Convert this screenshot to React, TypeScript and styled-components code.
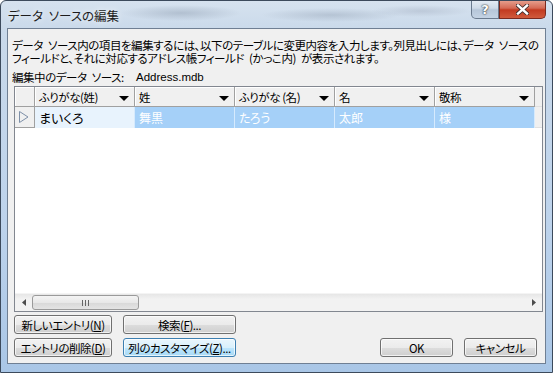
import React, { FC } from "react";
import styled, { createGlobalStyle } from "styled-components";

const GlobalStyle = createGlobalStyle`
  html, body {
    margin: 0;
    padding: 0;
    background: #ffffff;
  }
  body {
    font-family: "Noto Sans CJK JP", "Liberation Sans", sans-serif;
    font-size: 12px;
    color: #000;
  }
`;

const Frame = styled.div`
  width: 553px;
  height: 373px;
  box-sizing: border-box;
  display: flex;
  flex-direction: column;
  border: 1px solid #3c4a5c;
  border-radius: 6px 6px 0 0;
  background:
    radial-gradient(ellipse 60px 8px at 180px 12px, rgba(120, 135, 155, 0.35), transparent),
    radial-gradient(ellipse 70px 7px at 330px 14px, rgba(120, 135, 155, 0.3), transparent),
    radial-gradient(ellipse 50px 6px at 420px 10px, rgba(140, 150, 170, 0.3), transparent),
    linear-gradient(180deg, #d6e2ef 0%, #c9d9ea 30px, #bdd3ec 60%, #a9c6e6 100%);
  overflow: hidden;
`;

const TitleBar = styled.div`
  height: 27px;
  display: flex;
  align-items: flex-start;
  justify-content: space-between;
`;

const Title = styled.div`
  padding: 5px 0 0 7px;
  font-size: 12.5px;
  color: #1c1c1c;
  word-spacing: 3px;
  font-feature-settings: "palt";
  text-shadow: 0 0 6px rgba(255, 255, 255, 0.9);
`;

const CaptionButtons = styled.div`
  display: flex;
  margin-right: 6px;
  margin-top: -1px;
`;

const CaptionButton = styled.div<{ $close?: boolean }>`
  width: ${(p) => (p.$close ? "47px" : "28px")};
  height: 19px;
  box-sizing: border-box;
  display: flex;
  align-items: center;
  justify-content: center;
  border: 1px solid ${(p) => (p.$close ? "#7a2a1f" : "#6a7a8e")};
  border-top: none;
  border-radius: ${(p) => (p.$close ? "0 0 5px 0" : "0 0 0 5px")};
  background: ${(p) =>
    p.$close
      ? "linear-gradient(180deg, #e8a493 0%, #d46a55 45%, #c23a20 55%, #d05a3c 100%)"
      : "linear-gradient(180deg, #e6edf5 0%, #cfdbe8 45%, #b6c6d9 55%, #c4d3e4 100%)"};
  color: #fff;
  font-family: "DejaVu Sans", sans-serif;
  font-weight: bold;
  font-size: 13px;
  text-shadow: 0 0 2px #333, 0 0 1px #222;
`;

const Client = styled.div`
  flex: 1;
  margin: 0 6px 8px 6px;
  border: 1px solid #6f7f93;
  background: #f0f0f0;
  display: flex;
  flex-direction: column;
  padding: 10px 2px 0 4px;
  font-size: 11.5px;
  letter-spacing: -0.45px;
  word-spacing: 3px;
  font-feature-settings: "palt";
`;

const Description = styled.div`
  line-height: 13px;
  white-space: nowrap;
`;

const SourceLine = styled.div`
  margin-top: 5px;
  display: flex;
  line-height: 14px;
`;

const SourceLabel = styled.span`
  width: 124px;
`;

const Grid = styled.div`
  margin: 2px 0 0 2px;
  height: 226px;
  box-sizing: border-box;
  border: 1px solid #828790;
  background: #ffffff;
  display: flex;
  flex-direction: column;
`;

const GridRow = styled.div`
  display: grid;
  grid-template-columns: 20px repeat(5, 100px) 1fr;
`;

const HeaderCell = styled.div`
  height: 20px;
  box-sizing: border-box;
  background: #f0f0f0;
  border-right: 1px solid #a0a0a0;
  border-bottom: 1px solid #a0a0a0;
  box-shadow: inset 1px 1px 0 #ffffff;
  display: flex;
  align-items: center;
  justify-content: space-between;
  padding: 0 5px 0 4px;
  white-space: nowrap;
  word-spacing: 0;
`;

const Filler = styled.div`
  background: #f0f0f0;
  border-bottom: 1px solid #e0e0e0;
`;

const DropArrow = styled.span`
  width: 0;
  height: 0;
  margin-top: 3px;
  border-left: 5px solid transparent;
  border-right: 5px solid transparent;
  border-top: 5px solid #000;
`;

const SelectorCell = styled.div`
  height: 21px;
  box-sizing: border-box;
  background: #f0f0f0;
  border-right: 1px solid #a0a0a0;
  border-bottom: 1px solid #a0a0a0;
  display: flex;
  align-items: center;
  padding-left: 3px;
`;

const DataCell = styled.div<{ $current?: boolean }>`
  height: 21px;
  box-sizing: border-box;
  background: ${(p) => (p.$current ? "#e8f3fd" : "#a5d0f8")};
  color: ${(p) => (p.$current ? "#000" : "#ffffff")};
  border-right: 1px solid #d6eafd;
  display: flex;
  align-items: center;
  padding-left: 4px;
  font-size: ${(p) => (p.$current ? "13px" : "12px")};
  letter-spacing: 0;
`;

const GridBody = styled.div`
  flex: 1;
`;

const HScroll = styled.div`
  height: 17px;
  display: flex;
  align-items: stretch;
  background: linear-gradient(180deg, #e6e6e6 0%, #f2f2f2 30%, #f2f2f2 100%);
  border-top: 1px solid #f4f4f4;
`;

const ScrollArrow = styled.div`
  width: 17px;
  display: flex;
  align-items: center;
  justify-content: center;
`;

const ScrollThumb = styled.div`
  width: 107px;
  margin: 1px 0;
  box-sizing: border-box;
  border: 1px solid #9a9a9a;
  border-radius: 3px;
  background: linear-gradient(180deg, #f4f4f4 0%, #e8e8e8 50%, #d8d8d8 51%, #e4e4e4 100%);
  display: flex;
  align-items: center;
  justify-content: center;
  gap: 2px;
`;

const Grip = styled.span`
  width: 1px;
  height: 6px;
  background: #666;
`;

const ScrollTrack = styled.div`
  flex: 1;
`;

const ButtonArea = styled.div`
  margin: 3px 0 0 2px;
  display: grid;
  grid-template-columns: 98px 113px 1fr 73px 73px;
  grid-template-rows: 19px 19px;
  column-gap: 11px;
  row-gap: 4px;
  padding-right: 6px;
`;

const Button = styled.div<{ $focused?: boolean; $col: number; $row: number }>`
  grid-column: ${(p) => p.$col};
  grid-row: ${(p) => p.$row};
  box-sizing: border-box;
  border: 1px solid ${(p) => (p.$focused ? "#3c7fb1" : "#707070")};
  border-radius: 3px;
  background: ${(p) =>
    p.$focused
      ? "linear-gradient(180deg, #eaf6fd 0%, #d9f0fc 50%, #bee6fd 51%, #a7d9f5 100%)"
      : "linear-gradient(180deg, #f2f2f2 0%, #ebebeb 50%, #dddddd 51%, #cfcfcf 100%)"};
  box-shadow: inset 0 0 0 1px rgba(255, 255, 255, 0.7);
  display: flex;
  align-items: center;
  justify-content: center;
  white-space: nowrap;
`;

const Underline = styled.span`
  text-decoration: underline;
`;

const Spacer = styled.div`
  grid-column: 3;
`;

const columns = ["ふりがな(姓)", "姓", "ふりがな (名)", "名", "敬称"];
const values = ["まいくろ", "舞黒", "たろう", "太郎", "様"];

const App: FC = () => {
  return (
    <>
      <GlobalStyle />
      <Frame>
        <TitleBar>
          <Title>データ ソースの編集</Title>
          <CaptionButtons>
            <CaptionButton>?</CaptionButton>
            <CaptionButton $close>
              <svg width="13" height="11" viewBox="0 0 13 11">
                <path
                  d="M2 1.5 L11 9.5 M11 1.5 L2 9.5"
                  stroke="#3a2a2a"
                  strokeWidth="4"
                  strokeLinecap="square"
                />
                <path
                  d="M2 1.5 L11 9.5 M11 1.5 L2 9.5"
                  stroke="#ffffff"
                  strokeWidth="2.4"
                  strokeLinecap="square"
                />
              </svg>
            </CaptionButton>
          </CaptionButtons>
        </TitleBar>
        <Client>
          <Description>
            データ ソース内の項目を編集するには、以下のテーブルに変更内容を入力します。列見出しには、データ ソースの
            <br />
            フィールドと、それに対応するアドレス帳フィールド (かっこ内) が表示されます。
          </Description>
          <SourceLine>
            <SourceLabel>編集中のデータ ソース:</SourceLabel>
            <span style={{ fontFamily: "'Liberation Sans', sans-serif", letterSpacing: 0 }}>
              Address.mdb
            </span>
          </SourceLine>
          <Grid>
            <GridRow>
              <HeaderCell />
              {columns.map((c) => (
                <HeaderCell key={c}>
                  <span>{c}</span>
                  <DropArrow />
                </HeaderCell>
              ))}
              <Filler />
            </GridRow>
            <GridRow>
              <SelectorCell>
                <svg width="12" height="14" viewBox="0 0 12 14">
                  <path d="M1.5 1.5 L10 7 L1.5 12.5 Z" fill="none" stroke="#7d8fa7" strokeWidth="1" />
                </svg>
              </SelectorCell>
              {values.map((v, i) => (
                <DataCell key={v} $current={i === 0}>
                  {v}
                </DataCell>
              ))}
              <Filler />
            </GridRow>
            <GridBody />
            <HScroll>
              <ScrollArrow>
                <svg width="4" height="7" viewBox="0 0 4 7">
                  <path d="M4 0 L0 3.5 L4 7 Z" fill="#4d4d4d" />
                </svg>
              </ScrollArrow>
              <ScrollThumb>
                <Grip />
                <Grip />
                <Grip />
              </ScrollThumb>
              <ScrollTrack />
              <ScrollArrow>
                <svg width="4" height="7" viewBox="0 0 4 7">
                  <path d="M0 0 L4 3.5 L0 7 Z" fill="#4d4d4d" />
                </svg>
              </ScrollArrow>
            </HScroll>
          </Grid>
          <ButtonArea>
            <Button $col={1} $row={1}>
              新しいエントリ(<Underline>N</Underline>)
            </Button>
            <Button $col={2} $row={1}>
              検索(<Underline>F</Underline>)...
            </Button>
            <Button $col={1} $row={2}>
              エントリの削除(<Underline>D</Underline>)
            </Button>
            <Button $col={2} $row={2} $focused>
              列のカスタマイズ(<Underline>Z</Underline>)...
            </Button>
            <Spacer />
            <Button $col={4} $row={2}>
              OK
            </Button>
            <Button $col={5} $row={2}>
              キャンセル
            </Button>
          </ButtonArea>
        </Client>
      </Frame>
    </>
  );
};

export default App;
